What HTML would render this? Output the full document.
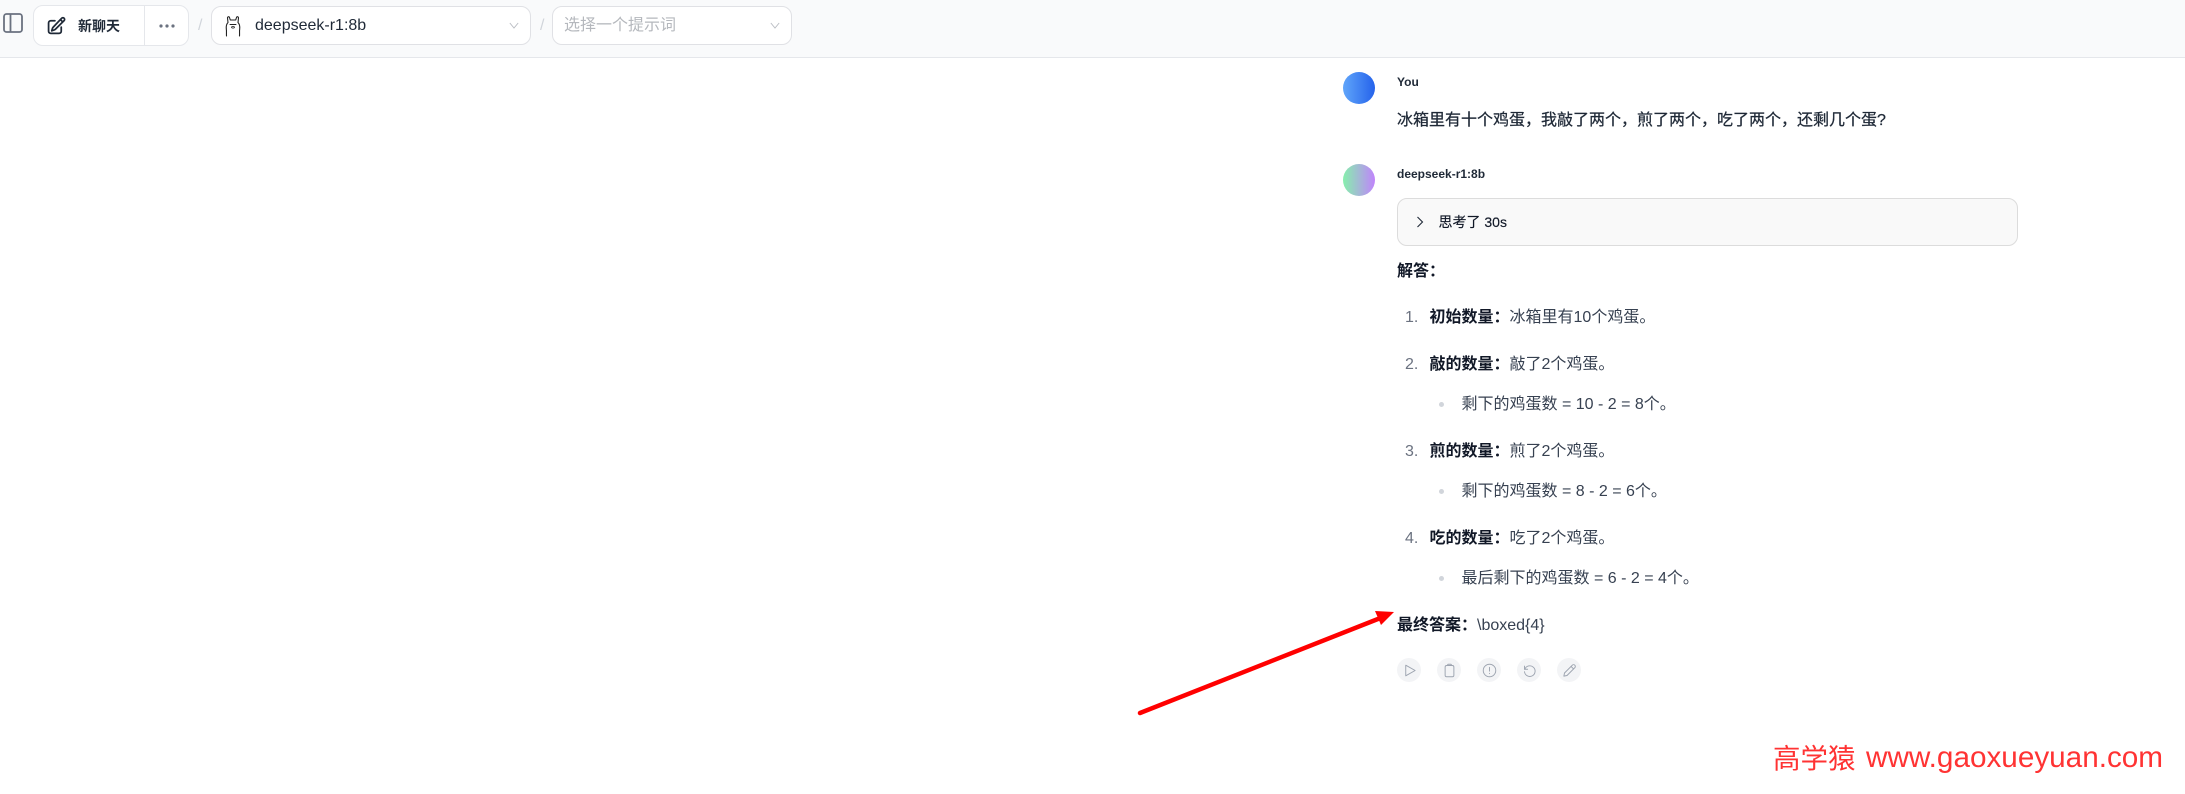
<!DOCTYPE html>
<html lang="zh">
<head>
<meta charset="utf-8">
<title>deepseek-r1:8b</title>
<style>
html,body{margin:0;padding:0;background:#fff}
body{width:2185px;height:794px;position:relative;overflow:hidden;font-family:"Liberation Sans","WenQuanYi Zen Hei","Noto Sans CJK SC",sans-serif;font-size:16px;color:#374151}
.a{position:absolute;white-space:nowrap;line-height:24px}
.b{font-weight:700;color:#111827}
.n{color:#6b7280}
.dot{position:absolute;width:5px;height:5px;border-radius:50%;background:#d1d5db;left:1439px}
.act{position:absolute;top:658px;width:24px;height:24px;border-radius:50%;background:#f3f4f6}
.act svg{position:absolute;left:4.5px;top:4.5px;width:15px;height:15px;fill:none;stroke:#9ca3af;stroke-width:1.5;stroke-linecap:round;stroke-linejoin:round}
.sel{position:absolute;top:6px;height:39px;box-sizing:border-box;background:#fff;border:1px solid #e0e1e5;border-radius:10px}
</style>
</head>
<body>
<div style="position:absolute;left:0;top:0;width:2185px;height:58px;background:#f9fafb;border-bottom:1px solid #e5e7eb;box-sizing:border-box"></div>

<svg style="position:absolute;left:3px;top:13px" width="20" height="20" viewBox="0 0 20 20" fill="none" stroke="#6b7280" stroke-width="1.800"><rect x="1" y="1" width="18" height="18" rx="2.500"/><path d="M7.500 1v18"/></svg>

<div style="position:absolute;left:33px;top:5px;width:156px;height:41px;box-sizing:border-box;background:#fff;border:1px solid #e5e7eb;border-radius:10px"></div>
<div style="position:absolute;left:144px;top:6px;width:1px;height:39px;background:#e5e7eb"></div>
<svg style="position:absolute;left:47px;top:16px" width="19" height="19" viewBox="0 0 24 24" fill="none" stroke="#1f2937" stroke-width="2.200" stroke-linecap="round" stroke-linejoin="round"><path d="M16.900 4.500l1.700-1.700a2.100 2.100 0 0 1 3 3L10.600 16.700a4.500 4.500 0 0 1-1.900 1.100L6 18.700l.8-2.700a4.500 4.500 0 0 1 1.100-1.900L16.900 4.500zM16.900 4.500L19.500 7.100"/><path d="M18 14v5.200A2.800 2.800 0 0 1 15.200 22H4.800A2.800 2.800 0 0 1 2 19.200V8.800A2.800 2.800 0 0 1 4.800 6H10"/></svg>
<div class="a" style="left:78px;top:14px;font-size:14px;font-weight:700;color:#1f2937;width:42px">新聊天</div>
<svg style="position:absolute;left:158px;top:22px" width="18" height="8" viewBox="0 0 18 8" fill="#6b7280"><circle cx="3" cy="4" r="1.600"/><circle cx="9" cy="4" r="1.600"/><circle cx="15" cy="4" r="1.600"/></svg>
<div class="a" style="left:198px;top:14px;color:#d1d5db">/</div>

<div class="sel" style="left:211px;width:320px"></div>
<svg style="position:absolute;left:224px;top:15px" width="18" height="22" viewBox="0 0 18 22" fill="none" stroke="#222" stroke-width="1.100" stroke-linecap="round" stroke-linejoin="round"><path d="M2.500 21C2.300 18 2.700 16 2.300 14C2 11 2.500 9 4 7.500L3.500 3C3.500 1.500 5 1.300 5.500 2.500L6.300 5H11.700L12.500 2.500C13 1.300 14.500 1.500 14.500 3L14 7.500C15.500 9 16 11 15.700 14C15.300 16 15.700 18 15.500 21"/><path d="M6 9.500h2.200M9.800 9.500H12M8 9.500h2" stroke-width="1"/><path d="M7.500 12C8.500 11.300 9.500 11.300 10.500 12C10.500 13.500 7.500 13.500 7.500 12Z" stroke-width=".8"/></svg>
<div class="a" style="left:255px;top:14px;color:#1f2937">deepseek-r1:8b</div>
<svg style="position:absolute;left:509px;top:21px" width="10" height="9" viewBox="0 0 12 10" fill="none" stroke="#b9bcc2" stroke-width="1.100"><path d="M1 2l5 6 5-6"/></svg>
<div class="a" style="left:540px;top:14px;color:#d1d5db">/</div>

<div class="sel" style="left:552px;width:240px"></div>
<div class="a" style="left:564px;top:14px;color:#b5b8bd">选择一个提示词</div>
<svg style="position:absolute;left:770px;top:21px" width="10" height="9" viewBox="0 0 12 10" fill="none" stroke="#b9bcc2" stroke-width="1.100"><path d="M1 2l5 6 5-6"/></svg>

<div style="position:absolute;left:1343px;top:72px;width:32px;height:32px;border-radius:50%;background:linear-gradient(90deg,#60a5fa,#2563eb)"></div>
<div class="a" style="left:1397px;top:70px;font-size:12px;font-weight:700;color:#1f2937">You</div>
<div class="a" style="left:1397px;top:109px;color:#1f2937;-webkit-text-stroke:.25px #1f2937">冰箱里有十个鸡蛋，我敲了两个，煎了两个，吃了两个，还剩几个蛋?</div>

<div style="position:absolute;left:1343px;top:164px;width:32px;height:32px;border-radius:50%;background:linear-gradient(90deg,#86efac,#c084fc)"></div>
<div class="a" style="left:1397px;top:162px;font-size:12px;font-weight:700;color:#1f2937">deepseek-r1:8b</div>

<div style="position:absolute;left:1397px;top:198px;width:621px;height:48px;box-sizing:border-box;background:#f9f9f9;border:1px solid #dcdcdc;border-radius:10px"></div>
<svg style="position:absolute;left:1415px;top:215px" width="10" height="14" viewBox="0 0 10 14" fill="none" stroke="#1f2937" stroke-width="1.100"><path d="M2.500 2l5 5-5 5"/></svg>
<div class="a" style="left:1438.500px;top:210px;font-size:14px;color:#111827;-webkit-text-stroke:.15px #111827">思考了 30s</div>

<div class="a b" style="left:1397px;top:260px">解答：</div>

<div class="a n" style="left:1405px;top:306px">1.</div>
<div class="a" style="left:1429.500px;top:306px"><span class="b">初始数量：</span>冰箱里有10个鸡蛋。</div>

<div class="a n" style="left:1405px;top:353px">2.</div>
<div class="a" style="left:1429.500px;top:353px"><span class="b">敲的数量：</span>敲了2个鸡蛋。</div>
<div class="dot" style="top:402px"></div>
<div class="a" style="left:1461.500px;top:393px">剩下的鸡蛋数 = 10 - 2 = 8个。</div>

<div class="a n" style="left:1405px;top:440px">3.</div>
<div class="a" style="left:1429.500px;top:440px"><span class="b">煎的数量：</span>煎了2个鸡蛋。</div>
<div class="dot" style="top:489px"></div>
<div class="a" style="left:1461.500px;top:480px">剩下的鸡蛋数 = 8 - 2 = 6个。</div>

<div class="a n" style="left:1405px;top:527px">4.</div>
<div class="a" style="left:1429.500px;top:527px"><span class="b">吃的数量：</span>吃了2个鸡蛋。</div>
<div class="dot" style="top:576px"></div>
<div class="a" style="left:1461.500px;top:567px">最后剩下的鸡蛋数 = 6 - 2 = 4个。</div>

<div class="a" style="left:1397px;top:614px"><span class="b">最终答案：</span>\boxed{4}</div>

<div class="act" style="left:1397px"><svg viewBox="0 0 24 24"><path d="M6 3.500v17L21 12z"/></svg></div>
<div class="act" style="left:1437px"><svg viewBox="0 0 24 24"><rect x="5" y="4" width="14" height="18" rx="2.500"/><path d="M9 4V3a1 1 0 0 1 1-1h4a1 1 0 0 1 1 1v1"/></svg></div>
<div class="act" style="left:1477px"><svg viewBox="0 0 24 24"><circle cx="12" cy="12" r="10"/><path d="M12 7v6M12 16.500v.5"/></svg></div>
<div class="act" style="left:1517px"><svg viewBox="0 0 24 24"><path d="M4 5v5h5"/><path d="M4.500 10A8.500 8.500 0 1 1 4 14"/></svg></div>
<div class="act" style="left:1557px"><svg viewBox="0 0 24 24"><path d="M16.500 3.500a2.800 2.800 0 0 1 4 4L8 20l-5 1 1-5z"/><path d="M14.500 5.500l4 4"/></svg></div>

<svg style="position:absolute;left:0;top:0" width="2185" height="794" viewBox="0 0 2185 794"><path d="M1140 713L1383 617" stroke="#ff0000" stroke-width="4.500" stroke-linecap="round" fill="none"/><path d="M1394 612L1375 611L1381 625Z" fill="#ff0000"/></svg>

<div class="a" style="left:1773px;top:737px;font-size:27.500px;line-height:38px;color:#ff3333;font-family:'Noto Sans CJK SC','Liberation Sans',sans-serif;font-weight:400">高学猿</div>
<div class="a" style="left:1866px;top:739px;font-size:29.700px;line-height:38px;color:#ff3333">www.gaoxueyuan.com</div>
</body>
</html>
